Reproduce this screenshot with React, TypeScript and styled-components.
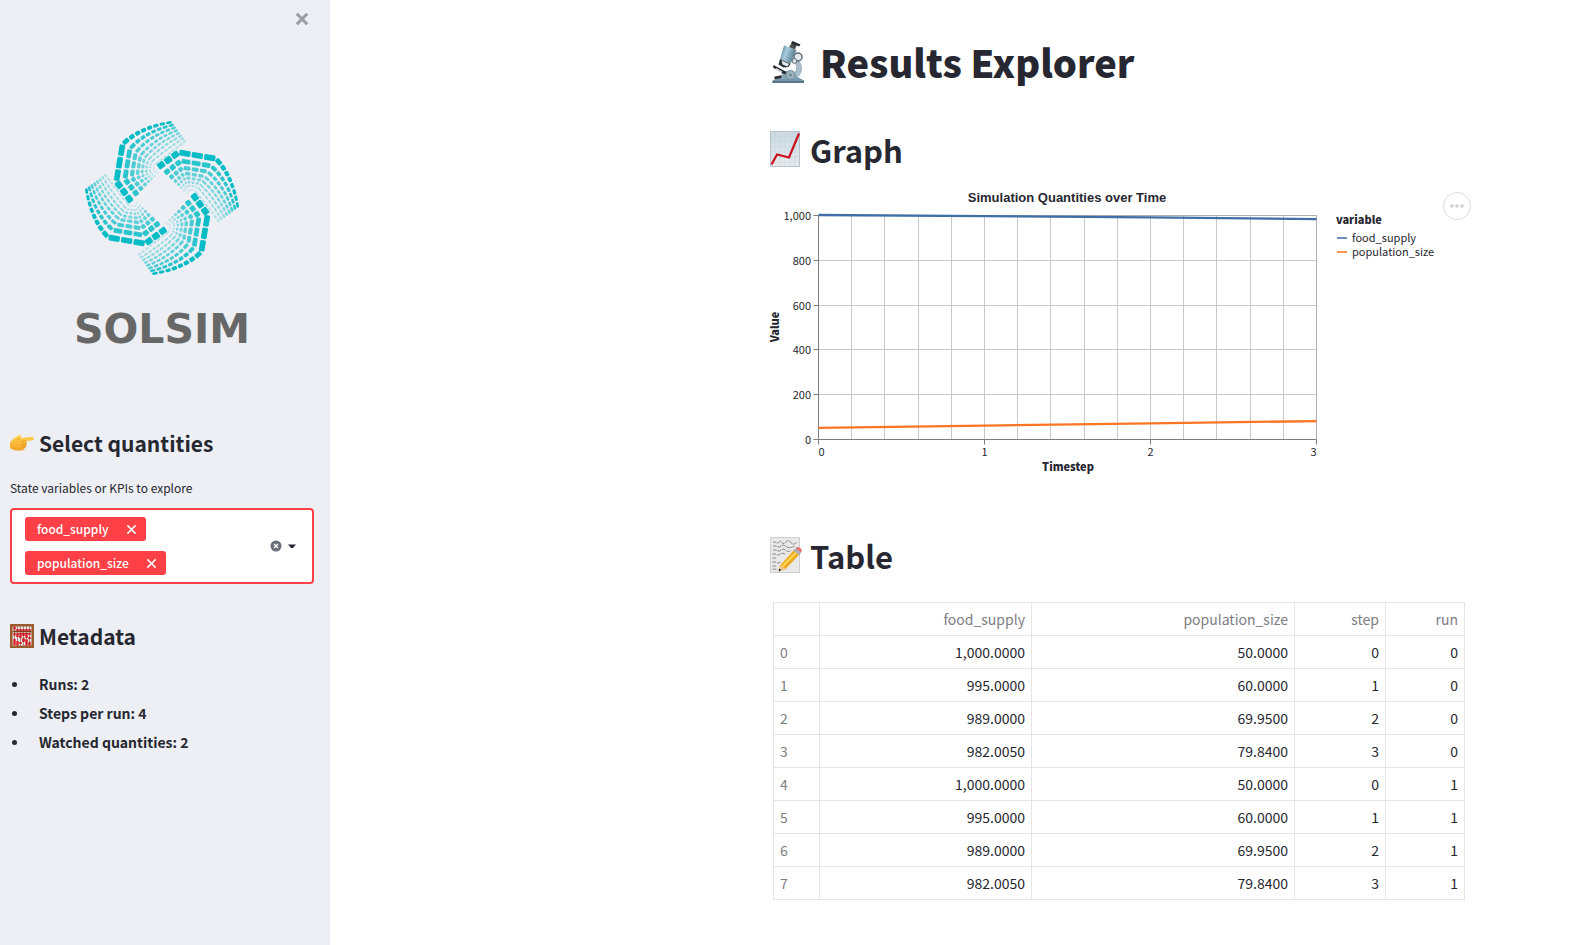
import React, { useState } from "react";
import styled, { createGlobalStyle } from "styled-components";

const sans = '"Noto Sans CJK SC", "Noto Sans", sans-serif';
const ink = "#262730";

const GlobalStyle = createGlobalStyle`
  *, *::before, *::after { box-sizing: border-box; }
  body { margin: 0; background: #ffffff; color: ${ink}; font-family: ${sans}; }
  h1, h2, h3, ul { margin: 0; padding: 0; }
  button, input { font: inherit; color: inherit; background: none; border: 0; padding: 0; }
  button { cursor: pointer; }
`;

const Page = styled.div`
  display: flex;
  min-height: 100vh;
`;

const Sidebar = styled.aside`
  flex: 0 0 330px;
  display: flex;
  flex-direction: column;
  padding: 0 16px 32px 10px;
  background: #edeff4;
`;

const CloseRow = styled.div`
  display: flex;
  justify-content: flex-end;
  padding: 12px 5px 0 0;
`;

const IconButton = styled.button`
  display: flex;
  align-items: center;
  justify-content: center;
`;

const Logo = styled.figure`
  display: flex;
  flex-direction: column;
  align-items: center;
  margin: 94px 0 76px;
`;

const Wordmark = styled.figcaption`
  margin-top: 29px;
  font-family: "DejaVu Sans", sans-serif;
  font-size: 41px;
  font-weight: 700;
  line-height: 48px;
  color: #666766;
`;

const SideHeading = styled.h3`
  display: flex;
  align-items: center;
  gap: 5px;
  font-size: 21px;
  font-weight: 700;
  line-height: 28px;
`;

const FieldLabel = styled.label`
  margin: 21px 0 10px;
  font-size: 12px;
  line-height: 20px;
`;

const MultiSelect = styled.div`
  display: flex;
  align-items: center;
  margin-bottom: 38px;
  padding: 7px 15px 7px 13px;
  border: 2px solid #ff4046;
  border-radius: 4px;
  background: #ffffff;
`;

const Chips = styled.div`
  flex: 1;
  display: flex;
  flex-wrap: wrap;
  gap: 10px 4px;
`;

const Chip = styled.span`
  display: inline-flex;
  align-items: center;
  gap: 17px;
  height: 24px;
  padding: 0 9px 0 12px;
  border-radius: 3px;
  background: #ff4046;
  color: #ffffff;
  font-size: 12px;
  font-weight: 500;
  line-height: 22px;
`;

const ChipInput = styled.input`
  flex: 0 1 60px;
  min-width: 0;
  height: 24px;
  font-size: 12px;
  outline: none;
`;

const SelectActions = styled.div`
  display: flex;
  align-items: center;
  gap: 5px;
`;

const MetaList = styled.ul`
  margin-top: 20px;
  list-style: none;
  font-size: 14px;
  font-weight: 700;
  line-height: 29px;
`;

const MetaItem = styled.li`
  display: flex;
  align-items: center;
  gap: 22px;
  padding-left: 2px;

  &::before {
    content: "";
    width: 5px;
    height: 5px;
    border-radius: 50%;
    background: ${ink};
  }
`;

const Main = styled.main`
  flex: 1;
  min-width: 0;
  padding: 36px 0 44px 340px;
`;

const Content = styled.div`
  max-width: 706px;
  margin: 0 auto;
`;

const Title = styled.h1`
  display: flex;
  align-items: center;
  gap: 11px;
  font-size: 38px;
  font-weight: 900;
  line-height: 52px;
`;

const SectionTitle = styled.h2`
  display: flex;
  align-items: center;
  gap: 8px;
  font-size: 31px;
  font-weight: 700;
  line-height: 40px;
`;

const GraphSection = styled.section`
  margin-top: 42px;
`;

const TableSection = styled.section`
  margin-top: 56px;
`;

const ChartFrame = styled.div`
  position: relative;
  margin-top: 10px;

  > svg {
    display: block;
    width: 100%;
    height: auto;
    overflow: visible;
  }
`;

const ChartMenu = styled.button`
  position: absolute;
  top: 12px;
  right: 5px;
  display: flex;
  align-items: center;
  justify-content: center;
  width: 28px;
  height: 28px;
  border: 1px solid #dddddd;
  border-radius: 50%;
`;

const DataTable = styled.table`
  width: calc(100% - 14px);
  margin: 26px 0 0 3px;
  border-collapse: collapse;
  table-layout: fixed;
  font-size: 14px;
  line-height: 20px;
`;

const Cell = styled.td`
  height: 33px;
  padding: 0 6px;
  border: 1px solid #e5e5e8;
  text-align: right;
`;

const HeadCell = styled(Cell)<{ $index?: boolean }>`
  color: #7d7d83;
  font-weight: 400;
  text-align: ${(p) => (p.$index ? "left" : "right")};
`;

/* ---------- logo ---------- */

type Pt = [number, number];
const mix = (a: Pt, b: Pt, t: number): Pt => [a[0] + (b[0] - a[0]) * t, a[1] + (b[1] - a[1]) * t];

interface Tile { x: number; y: number; len: number; w: number; angle: number; o: number }

function bladeTiles() {
  const depth = [0, 0.23, 0.41, 0.56, 0.68, 0.79, 0.89, 1];
  const out: Tile[] = [];
  depth.forEach((t, i) => {
    const start = mix([184, 278], [264, 192], t);
    const c1 = mix([138, 215], [250, 184], t);
    const c2 = mix([157, 103], [252, 166], t);
    const end = mix([306, 37], [348, 92], i / 7);
    const ctrl = mix(mix(c2, end, 0.45), [190, 20], 0.4 * (1 - t));
    const opacity = 1 - t * 0.72;
    const thick = 19 * (1 - t * 0.72);
    const push = (p: Pt, q: Pt, w: number, gap: number, o: number) => {
      const full = Math.hypot(q[0] - p[0], q[1] - p[1]);
      out.push({
        x: (p[0] + q[0]) / 2,
        y: (p[1] + q[1]) / 2,
        len: Math.max(full - gap, full * 0.5),
        w,
        angle: (Math.atan2(q[1] - p[1], q[0] - p[0]) * 180) / Math.PI,
        o,
      });
    };
    for (let k = 0; k < 3; k++) {
      push(mix(start, c1, k / 3), mix(start, c1, (k + 1) / 3), thick, 4, opacity);
      push(mix(c1, c2, k / 3), mix(c1, c2, (k + 1) / 3), thick * 0.9, 4, opacity);
    }
    const n = 8;
    const at = (u: number) => mix(mix(c2, ctrl, u), mix(ctrl, end, u), u);
    for (let k = 0; k < n; k++) {
      const w = thick * 0.75 * (1 - k / n) + 7 * (k / n);
      push(at(Math.pow(k / n, 0.86)), at(Math.pow((k + 1) / n, 0.86)), w, 4, opacity);
    }
  });
  return out;
}

const tiles = bladeTiles();

const Swirl = () => (
  <svg width="156" height="156" viewBox="41 31 468 468" aria-hidden="true">
    {[0, 90, 180, 270].map((r) => (
      <g key={r} transform={`rotate(${r} 275 265)`} fill="#04bcc6">
        {tiles.map((c, i) => (
          <rect
            key={i}
            x={-c.len / 2}
            y={-c.w / 2}
            width={c.len}
            height={c.w}
            rx={Math.min(4, c.w / 3)}
            fillOpacity={c.o}
            transform={`translate(${c.x} ${c.y}) rotate(${c.angle})`}
          />
        ))}
      </g>
    ))}
  </svg>
);

/* ---------- pictograms ---------- */

const PointingHand = () => (
  <svg width="24" height="24" viewBox="0 0 24 24" aria-hidden="true">
    <defs>
      <linearGradient id="hand" x1="0" y1="0" x2="0" y2="1">
        <stop offset="0" stopColor="#ffd24f" />
        <stop offset="1" stopColor="#f3a325" />
      </linearGradient>
    </defs>
    <path d="M0 11.5C2 8.5 5 6 8 4.8c1.200-.8 3-1.100 3.300 0 .3 1-.8 1.700-1.700 2.300L22 5.700c2.400 0 2.600 3.300.3 3.700l-6.300.6c1.200.8 1.200 2.200.2 3 .7 1 .3 2.200-.7 2.700.2 1.200-.5 2-1.600 2.200-.2 1.300-1.200 1.700-2.500 1.700H6.500C3.500 19.400 1.500 18 0 17z" fill="url(#hand)" />
    <path d="M9.600 7.100L8 8.700M16 10l-4 .5M16.200 13l-4 .3M15.500 15.700l-3.500.2" stroke="#d98818" strokeWidth=".7" fill="none" strokeLinecap="round" />
  </svg>
);

const Abacus = () => (
  <svg width="24" height="24" viewBox="0 0 24 24" aria-hidden="true">
    <rect width="24" height="24" fill="#8d4f26" />
    <rect x="1" y="1" width="22" height="22" fill="none" stroke="#b06f3b" strokeWidth=".8" />
    <rect x="2.500" y="2.500" width="19" height="19" fill="#f0e8e6" />
    <path d="M4.500 2.500v19M7.500 2.500v19M10.500 2.500v19M13.500 2.500v19M16.500 2.500v19M19.500 2.500v19" stroke="#8c5a52" strokeWidth=".7" />
    <path d="M2.500 7.500h19" stroke="#7d3f1d" strokeWidth="1.600" />
    <path d="M4.500 2.600v3M7.500 5v2M10.500 5v2M13.500 5v2M16.500 5v2M19.500 5v2M4.500 9v2.500M4.500 15v6M7.500 9v4M7.500 17v4.500M10.500 9v5M10.500 18v2M13.500 9v3M13.500 14v4M16.500 10v4M16.500 16v5.500M19.500 9v2M19.500 13v2M19.500 18v3.500" stroke="#d3151e" strokeWidth="2.300" />
    <path d="M9 9.500h9M12 16h6" stroke="#d3151e" strokeWidth="1.200" />
  </svg>
);

const Microscope = () => (
  <svg width="39" height="44" viewBox="0 0 39 44" aria-hidden="true">
    <defs>
      <linearGradient id="tube" x1="0" y1="0" x2="1" y2=".4">
        <stop offset="0" stopColor="#4b7186" />
        <stop offset=".45" stopColor="#a9cbdd" />
        <stop offset="1" stopColor="#53788c" />
      </linearGradient>
    </defs>
    <path d="M27 19c5 4 6.500 12 1.500 17l-5 2-2-3c5-2 7-8 3-13z" fill="#a9bfcc" stroke="#7b95a5" strokeWidth=".6" />
    <path d="M2.500 40.500l7-3.500h18l6.500 3.500V43h-31.500z" fill="#7697aa" />
    <path d="M2.500 42h31.500" stroke="#4e6b7c" strokeWidth="1.500" />
    <path d="M12 31h12l3 8H11z" fill="#89a6b6" />
    <circle cx="20.500" cy="35" r="4.500" fill="#9db2bf" stroke="#6f8a9a" />
    <circle cx="20.500" cy="35" r="1.500" fill="#6f8794" />
    <path d="M3.500 25l13 7-1.500 2.500-12-7z" fill="#26292c" />
    <path d="M6 28.500l6 3.500" stroke="#dfe5e9" strokeWidth="1.400" />
    <path d="M4.500 38l7-1.500" stroke="#26292c" strokeWidth="2.500" />
    <path d="M14 5.500l12.500 4.500-6 14-10.500-5z" fill="url(#tube)" />
    <path d="M10 19l10.500 5-2 3-5 .5-5-3z" fill="#25333b" />
    <path d="M11.500 20.500l7.500 3.500-1.500 2.500-5-2z" fill="#e5ecef" />
    <path d="M19 7l3-4.500 5 2-2 5z" fill="#454c50" />
    <path d="M22.500 1l8 3.500-1.500 2-8-3.500z" fill="#24282b" />
    <circle cx="28" cy="17" r="4" fill="#e4eaee" stroke="#5d6d77" strokeWidth="1.500" />
    <circle cx="24.500" cy="21" r="2.400" fill="#dbe3e8" stroke="#5d6d77" />
  </svg>
);

const ChartIcon = () => (
  <svg width="32" height="40" viewBox="0 0 32 40" aria-hidden="true">
    <defs>
      <linearGradient id="sheet" x1="0" y1="0" x2="0" y2="1">
        <stop offset="0" stopColor="#cbd9e2" />
        <stop offset="1" stopColor="#e6eaee" />
      </linearGradient>
    </defs>
    <rect x=".5" y="1.500" width="29" height="35" fill="url(#sheet)" stroke="#b8c4cc" />
    <path d="M5 2v34M10 2v34M15 2v34M20 2v34M25 2v34M1 7h28M1 12h28M1 17h28M1 22h28M1 27h28M1 32h28" stroke="#b9cbd6" strokeWidth=".3" />
    <path d="M1.500 34.500l5.500-10 12 3L29 3.500" fill="none" stroke="#c9101c" strokeWidth="2.200" />
  </svg>
);

const Memo = () => (
  <svg width="32" height="40" viewBox="0 1 32 40" aria-hidden="true">
    <rect x=".5" y="2.500" width="29" height="35" fill="#e9e9e9" stroke="#cfcfcf" />
    <path d="M3 7.500q1.500-1.500 3 0t3-.5 3 .5 4-.5 5 .5 6-.5M3 11.500q2-1.500 4 0t4-.5 5 .5 9-.5M3 15.500q2-1.500 4 0t4-.5 5 .5 5-.5M2.500 19.500q2-1.500 4 0t4-.5 5 .5M2.500 23.500q2-1.500 4 0M2.500 27.500q2-1.500 4 0t4-.5M2.500 31.500q2-1.500 4 0M2.500 34.500q2-1 5 0" stroke="#5d5d5d" strokeWidth=".7" strokeDasharray="4 .8" fill="none" />
    <path d="M10 30.500L24 15l5.500 4.500L15.500 34 9 36z" fill="#f0ab1d" />
    <path d="M12 32L26.500 17" stroke="#ffd55c" strokeWidth="2" />
    <path d="M10 30.500l5.500 3.500L9 36.200z" fill="#ecc995" />
    <path d="M9.200 33.500l2.300 1.600L8.600 36.500z" fill="#252525" />
    <path d="M23.500 15.500l2-2.200 5.500 4.500-2 2.200z" fill="#aab0b6" />
    <path d="M25.500 13.300c1.500-1.800 3-1.600 4.800-.3 1.700 1.500 2 3 .7 4.800z" fill="#e8707a" />
  </svg>
);

const Cross = ({ size, width, color }: { size: number; width: number; color: string }) => (
  <svg width={size} height={size} viewBox="0 0 12 12" aria-hidden="true">
    <path d="M1.500 1.500l9 9M10.500 1.500l-9 9" stroke={color} strokeWidth={width} fill="none" />
  </svg>
);

/* ---------- chart ---------- */

const plot = { left: 48.5, top: 35.5, width: 498, height: 224 };
const px = (step: number) => plot.left + (step / 3) * plot.width;
const py = (value: number) => plot.top + plot.height * (1 - value / 1000);
const snap = (v: number) => Math.floor(v) + 0.5;
const series = [
  { name: "food_supply", color: "#3f6fa5", key: "#6a91ba", values: [1000, 995, 989, 982.005] },
  { name: "population_size", color: "#fb7523", key: "#fc9547", values: [50, 60, 69.95, 79.84] },
];

const Chart = () => (
  <svg viewBox="0 0 706 300" role="img" aria-label="Simulation Quantities over Time" fontFamily={sans} fontSize="11" fill={ink}>
    <g stroke="#c9c9cc">
      {Array.from({ length: 16 }, (_, i) => (
        <path key={i} d={`M${snap(px(i / 5))} ${plot.top}v${plot.height}`} />
      ))}
      {[200, 400, 600, 800, 1000].map((v) => (
        <path key={v} d={`M${plot.left} ${snap(py(v))}h${plot.width}`} />
      ))}
    </g>
    <path d={`M${plot.left} ${plot.top}h${plot.width}v${plot.height}`} fill="none" stroke="#b0b0b2" />
    <path d={`M${plot.left} ${plot.top}v${plot.height}h${plot.width}`} fill="none" stroke="#7d7d80" />
    {[0, 200, 400, 600, 800, 1000].map((v) => (
      <g key={v}>
        <path d={`M${plot.left - 5} ${snap(py(v))}h5`} stroke="#808080" />
        <text x="41" y={snap(py(v)) + 4.5} textAnchor="end">{v.toLocaleString("en-US")}</text>
      </g>
    ))}
    {[0, 1, 2, 3].map((s) => (
      <g key={s}>
        <path d={`M${snap(px(s))} ${plot.top + plot.height}v5`} stroke="#808080" />
        <text x={px(s)} y="276" textAnchor={s === 0 ? "start" : s === 3 ? "end" : "middle"}>{s}</text>
      </g>
    ))}
    {series.map((s) => (
      <polyline key={s.name} points={s.values.map((v, i) => `${px(i)},${py(v) - 0.5}`).join(" ")} fill="none" stroke={s.color} strokeWidth="2.300" />
    ))}
    <text x="297" y="22" textAnchor="middle" fontFamily='"Liberation Sans", sans-serif' fontSize="13" fontWeight="700">Simulation Quantities over Time</text>
    <text x="298" y="291" textAnchor="middle" fontWeight="900">Timestep</text>
    <text transform="translate(9 147) rotate(-90)" textAnchor="middle" fontWeight="900">Value</text>
    <text x="566" y="44" fontWeight="900">variable</text>
    {series.map((s, i) => (
      <g key={s.name}>
        <path d={`M567 ${58 + i * 14}h10`} stroke={s.key} strokeWidth="2" />
        <text x="582" y={62 + i * 14}>{s.name}</text>
      </g>
    ))}
  </svg>
);

/* ---------- page ---------- */

const columns = ["food_supply", "population_size", "step", "run"];
const rows = [0, 1].flatMap((run) =>
  [0, 1, 2, 3].map((step) => [
    series[0].values[step].toLocaleString("en-US", { minimumFractionDigits: 4 }),
    series[1].values[step].toFixed(4),
    String(step),
    String(run),
  ])
);

export default function App() {
  const [selected, setSelected] = useState(["food_supply", "population_size"]);
  return (
    <>
      <GlobalStyle />
      <Page>
        <Sidebar>
          <CloseRow>
            <IconButton aria-label="Close sidebar"><Cross size={14} width={2.6} color="#9b9da6" /></IconButton>
          </CloseRow>
          <Logo>
            <Swirl />
            <Wordmark>SOLSIM</Wordmark>
          </Logo>
          <SideHeading><PointingHand />Select quantities</SideHeading>
          <FieldLabel htmlFor="quantities">State variables or KPIs to explore</FieldLabel>
          <MultiSelect>
            <Chips>
              {selected.map((name) => (
                <Chip key={name}>
                  {name}
                  <IconButton aria-label={`Remove ${name}`} onClick={() => setSelected(selected.filter((n) => n !== name))}>
                    <Cross size={11} width={1.6} color="#ffffff" />
                  </IconButton>
                </Chip>
              ))}
              <ChipInput id="quantities" type="text" autoComplete="off" />
            </Chips>
            <SelectActions>
              <IconButton aria-label="Clear all" onClick={() => setSelected([])}>
                <svg width="12" height="12" viewBox="0 0 12 12" aria-hidden="true">
                  <circle cx="6" cy="6" r="5.500" fill="#6c6f7d" />
                  <path d="M4 4l4 4M8 4l-4 4" stroke="#ffffff" strokeWidth="1.400" />
                </svg>
              </IconButton>
              <IconButton aria-label="Open options">
                <svg width="10" height="12" viewBox="0 0 10 12" aria-hidden="true">
                  <path d="M1 4.500h8L6 8H4z" fill={ink} />
                </svg>
              </IconButton>
            </SelectActions>
          </MultiSelect>
          <SideHeading><Abacus />Metadata</SideHeading>
          <MetaList>
            <MetaItem>Runs: 2</MetaItem>
            <MetaItem>Steps per run: 4</MetaItem>
            <MetaItem>Watched quantities: 2</MetaItem>
          </MetaList>
        </Sidebar>
        <Main>
          <Content>
            <Title><Microscope />Results Explorer</Title>
            <GraphSection>
              <SectionTitle><ChartIcon />Graph</SectionTitle>
              <ChartFrame>
                <Chart />
                <ChartMenu aria-label="Chart options">
                  <svg width="14" height="4" viewBox="0 0 14 4" aria-hidden="true" fill="#cfcfcf">
                    <circle cx="2" cy="2" r="1.800" /><circle cx="7" cy="2" r="1.800" /><circle cx="12" cy="2" r="1.800" />
                  </svg>
                </ChartMenu>
              </ChartFrame>
            </GraphSection>
            <TableSection>
              <SectionTitle><Memo />Table</SectionTitle>
              <DataTable>
                <colgroup>
                  <col width="46" /><col width="212" /><col width="263" /><col width="91" /><col width="79" />
                </colgroup>
                <thead>
                  <tr>
                    <HeadCell aria-label="Index" />
                    {columns.map((c) => <HeadCell as="th" scope="col" key={c}>{c}</HeadCell>)}
                  </tr>
                </thead>
                <tbody>
                  {rows.map((r, i) => (
                    <tr key={i}>
                      <HeadCell as="th" scope="row" $index>{i}</HeadCell>
                      {r.map((v, j) => <Cell key={j}>{v}</Cell>)}
                    </tr>
                  ))}
                </tbody>
              </DataTable>
            </TableSection>
          </Content>
        </Main>
      </Page>
    </>
  );
}
